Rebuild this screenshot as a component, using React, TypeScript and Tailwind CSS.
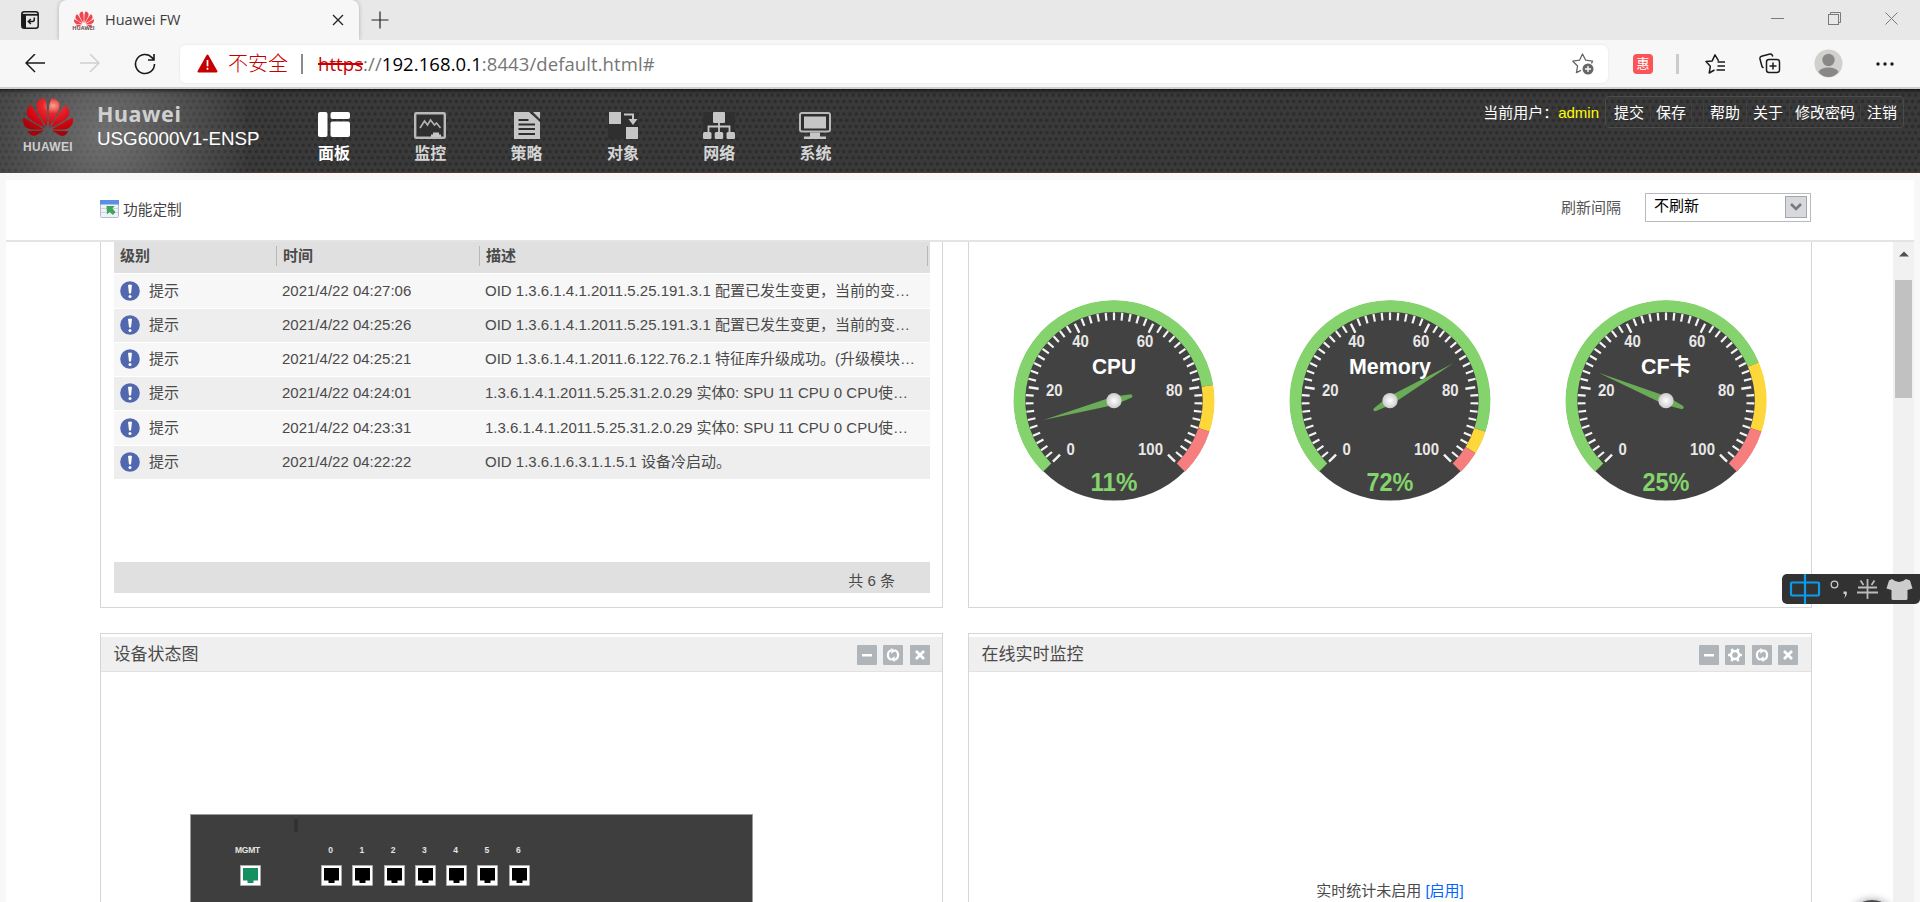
import type { ReactNode } from "react";
import { SiHuawei } from "react-icons/si";

const logs = [
  { time: "2021/4/22 04:27:06", text: "OID 1.3.6.1.4.1.2011.5.25.191.3.1 配置已发生变更，当前的变…", row: "h-[34px] pt-[7px] bg-[#f7f7f7]" },
  { time: "2021/4/22 04:25:26", text: "OID 1.3.6.1.4.1.2011.5.25.191.3.1 配置已发生变更，当前的变…", row: "h-[33px] pt-[6px] bg-[#eeeeee]" },
  { time: "2021/4/22 04:25:21", text: "OID 1.3.6.1.4.1.2011.6.122.76.2.1 特征库升级成功。(升级模块…", row: "h-[33px] pt-[6px] bg-[#f7f7f7]" },
  { time: "2021/4/22 04:24:01", text: "1.3.6.1.4.1.2011.5.25.31.2.0.29 实体0: SPU 11 CPU 0 CPU使…", row: "h-[33px] pt-[6px] bg-[#eeeeee]" },
  { time: "2021/4/22 04:23:31", text: "1.3.6.1.4.1.2011.5.25.31.2.0.29 实体0: SPU 11 CPU 0 CPU使…", row: "h-[34px] pt-[7px] bg-[#f7f7f7]" },
  { time: "2021/4/22 04:22:22", text: "OID 1.3.6.1.6.3.1.1.5.1 设备冷启动。", row: "h-[33px] pt-[6px] bg-[#eeeeee]" },
];

const START = 225;
const SWEEP = 2.7;

function point(value: number, r: number) {
  const a = ((START - SWEEP * value) * Math.PI) / 180;
  return [r * Math.cos(a), -r * Math.sin(a)];
}

function ringPath(from: number, to: number) {
  const [x1, y1] = point(from, 100.4);
  const [x2, y2] = point(to, 100.4);
  const [x3, y3] = point(to, 88.7);
  const [x4, y4] = point(from, 88.7);
  const large = (to - from) * SWEEP > 180 ? 1 : 0;
  return `M${x1} ${y1}A100.4 100.4 0 ${large} 1 ${x2} ${y2}L${x3} ${y3}A88.7 88.7 0 ${large} 0 ${x4} ${y4}Z`;
}

const gaugeLabels = [
  { v: "0", x: -43.3, y: 54.2 },
  { v: "20", x: -59.7, y: -5 },
  { v: "40", x: -33.5, y: -54 },
  { v: "60", x: 31, y: -54 },
  { v: "80", x: 60.3, y: -5 },
  { v: "100", x: 36.5, y: 54.2 },
];

function Gauge({ name, width, value, warn, danger }: { name: string; width: number; value: number; warn: number; danger: number }) {
  const ticks = Array.from({ length: 51 }, (_, i) => i * 2);
  return (
    <svg width="202" height="202" viewBox="-101 -100.7 202 202" fontFamily="'Liberation Sans','Noto Sans CJK SC',sans-serif" fontWeight="bold" textAnchor="middle">
      <defs>
        <radialGradient id="knob">
          <stop offset="0" stopColor="#ffffff" />
          <stop offset="1" stopColor="#cccccc" />
        </radialGradient>
      </defs>
      <circle r="99.9" fill="#424242" />
      <path d={ringPath(0, warn)} fill="#84d36c" />
      <path d={ringPath(warn, danger)} fill="#fed83a" />
      <path d={ringPath(danger, 100)} fill="#f67e7e" />
      {ticks.map((t) => {
        const major = t % 20 === 0;
        const [x1, y1] = point(t, major ? 86.3 : 88.3);
        const [x2, y2] = point(t, major ? 76.3 : 80.5);
        return <line key={t} x1={x1} y1={y1} x2={x2} y2={y2} stroke="#f4f4f4" strokeWidth={major ? 2.4 : 2.2} />;
      })}
      {gaugeLabels.map((l) => (
        <text key={l.v} x={l.x} y={l.y} fontSize="16" fill="#e8e8e8" textLength={l.v.length * 8.3} lengthAdjust="spacingAndGlyphs">
          {l.v}
        </text>
      ))}
      <text y="-26.3" fontSize="21.5" fill="#ffffff" textLength={width} lengthAdjust="spacingAndGlyphs">
        {name}
      </text>
      <path
        d="M-73 0L0 -4.2L18 -1.7Q20 0 18 1.7L0 4.2Z"
        fill="#6aab57"
        transform={`rotate(${SWEEP * value - 45})`}
      />
      <circle r="7.6" fill="url(#knob)" />
      <text y="90.8" fontSize="26" fill="#84d36c" textLength="47" lengthAdjust="spacingAndGlyphs">
        {value}%
      </text>
    </svg>
  );
}

function PetalLogo({ size }: { size: number }) {
  return (
    <>
      <svg width="0" height="0" className="absolute">
        <defs>
          <radialGradient id="petal" cx="0.6" cy="0.2" r="0.75">
            <stop offset="0" stopColor="#f7a58c" />
            <stop offset="0.28" stopColor="#e8252c" />
            <stop offset="0.7" stopColor="#d0050f" />
            <stop offset="1" stopColor="#a5030a" />
          </radialGradient>
        </defs>
      </svg>
      <SiHuawei size={size} fill="url(#petal)" />
    </>
  );
}

function BrowserTabs() {
  return (
    <div className="flex h-10 items-stretch bg-[#e8e8e8] font-['Open_Sans','Noto_Sans_CJK_SC',sans-serif]">
      <div className="flex w-[59px] items-center pl-[21px]">
        <svg width="18" height="18" viewBox="0 0 18 18" fill="none" stroke="#1b1b1b" strokeWidth="1.5">
          <rect x="0.8" y="0.8" width="16.4" height="16.4" rx="2.5" />
          <path d="M1 3.8h16" strokeWidth="1.8" />
          <path d="M1 3h4v14H3q-2 0-2-2z" fill="#1b1b1b" stroke="none" />
          <path d="M13.3 6.5v2q0 2-2 2H7.5M9.8 8L7.3 10.5L9.8 13" />
        </svg>
      </div>
      <div className="flex w-[300px] items-center rounded-t-lg bg-[#f7f7f7] shadow-[0_0_4px_rgba(0,0,0,0.25)]">
        <div className="ml-[14px] flex w-[21px] flex-col items-center">
          <SiHuawei size={20} className="-mb-[3px] text-[#f0454c]" />
          <span className="text-[5.5px] leading-[5px] font-bold text-[#6b4a4a]">HUAWEI</span>
        </div>
        <span className="ml-[11px] -mt-px text-[14.5px] text-[#3c3c3c]">Huawei FW</span>
        <svg className="mr-[15px] ml-auto" width="12" height="12" viewBox="0 0 12 12" stroke="#222" strokeWidth="1.3">
          <path d="M1 1l10 10M11 1L1 11" />
        </svg>
      </div>
      <svg className="ml-[12px] self-center" width="18" height="18" viewBox="0 0 18 18" stroke="#222" strokeWidth="1.2">
        <path d="M9 0.5v17M0.5 9h17" />
      </svg>
      <div className="mr-[22px] -mt-[3px] ml-auto flex items-center gap-[44px]">
        <svg width="13" height="14" viewBox="0 0 13 14" stroke="#7a7a7a">
          <path d="M0 6.5h13" />
        </svg>
        <svg width="13" height="13" viewBox="0 0 13 13" fill="none" stroke="#7a7a7a">
          <rect x="0.5" y="2.5" width="10" height="10" />
          <path d="M2.5 2.5v-2h10v10h-2" />
        </svg>
        <svg width="13" height="13" viewBox="0 0 13 13" stroke="#7a7a7a">
          <path d="M0.5 0.5l12 12M12.5 0.5l-12 12" />
        </svg>
      </div>
    </div>
  );
}

function AddressBar() {
  return (
    <div className="z-10 flex h-[49px] items-center border-b-2 border-[#cecece] bg-[#f7f7f7] font-['Open_Sans','Noto_Sans_CJK_SC',sans-serif]">
      <svg className="ml-[25px]" width="20" height="20" viewBox="0 0 20 20" fill="none" stroke="#1b1b1b" strokeWidth="1.5">
        <path d="M20 9H1M10 0L1 9l9 9" />
      </svg>
      <svg className="ml-[35px]" width="20" height="20" viewBox="0 0 20 20" fill="none" stroke="#cfcfcf" strokeWidth="1.5">
        <path d="M0 9h19M10 0l9 9l-9 9" />
      </svg>
      <svg className="ml-[34px]" width="22" height="22" viewBox="0 0 22 22" fill="none" stroke="#1b1b1b" strokeWidth="1.6">
        <path d="M20.5 11A9.5 9.5 0 1 1 18 4.6l1.6 2M20 1v6h-6" />
      </svg>
      <div className="ml-[24px] flex h-[38px] w-[1428px] items-center rounded-md bg-white shadow-[0_0_3px_rgba(0,0,0,0.08)]">
        <svg className="ml-[17px]" width="21" height="19" viewBox="0 0 21 19">
          <path d="M10.5 1.5L19.5 17.5h-18z" fill="#c50000" stroke="#c50000" strokeWidth="2" strokeLinejoin="round" />
          <path d="M10.5 6v6.2M10.5 13.8v2" stroke="#fff" strokeWidth="1.7" />
        </svg>
        <span className="ml-[10px] text-[20px] leading-[26px] font-light text-[#c50000]">不安全</span>
        <span className="ml-[13px] h-5 w-[2px] bg-[#8a8a8a]" />
        <span className="ml-[15px] text-[18.5px] leading-[26px] tracking-[0.08px] whitespace-nowrap text-[#767676]">
          <span className="text-[#c50000] line-through decoration-2">https</span>://<span className="text-black">192.168.0.1</span>
          :8443/default.html#
        </span>
        <svg className="mr-[14px] ml-auto" width="22" height="22" viewBox="0 0 22 22" fill="none" stroke="#666" strokeWidth="1.3">
          <path d="M19.5 10.5l1-2.3l-6.8-1L10.5 1L7.5 7.2l-6.7 1l4.8 4.8l-1.2 6.7l4.5-2.3" strokeLinejoin="round" />
          <circle cx="16" cy="16" r="5.5" fill="#666" stroke="none" />
          <path d="M16 13v6M13 16h6" stroke="#fff" />
        </svg>
      </div>
      <span className="ml-[25px] flex size-5 items-center justify-center rounded bg-[#fa5358] text-[13px] leading-none text-white">惠</span>
      <span className="ml-[23px] h-5 w-[3px] bg-[#cbcbcb]" />
      <svg className="ml-[26px]" width="21" height="20" viewBox="0 0 21 20" fill="none" stroke="#1b1b1b" strokeWidth="1.5">
        <path d="M13.6 6.8L10 0.9L7.2 6.9L1 7.6l4.3 4.7L4.2 19l5.3-3" strokeLinejoin="round" />
        <path d="M12.5 8H20M12.5 12H20M11.5 16H20" />
      </svg>
      <svg className="ml-[33px]" width="22" height="21" viewBox="0 0 22 21" fill="none" stroke="#1b1b1b" strokeWidth="1.5">
        <rect x="7.5" y="6.5" width="13" height="13" rx="2.5" />
        <path d="M14 9.5v7M10.5 13h7M4.5 15L3 13.5L1 6q-.4-2.2 1.5-2.8L11 1q2-.4 2.8 2.5" />
      </svg>
      <svg className="ml-[33px]" width="29" height="29" viewBox="0 0 29 29">
        <circle cx="14.5" cy="14.5" r="14" fill="#d2d0cd" />
        <circle cx="14.5" cy="11" r="6.2" fill="#8a8886" />
        <path d="M4.5 23q2-4.500 10-4.500t10 4.500q-4 5-10 5t-10-5z" fill="#8a8886" />
      </svg>
      <svg className="ml-[33px]" width="18" height="4" viewBox="0 0 18 4" fill="#1b1b1b">
        <circle cx="2" cy="2" r="1.7" />
        <circle cx="9" cy="2" r="1.7" />
        <circle cx="16" cy="2" r="1.7" />
      </svg>
    </div>
  );
}

function NavIcon({ children }: { children: ReactNode }) {
  return (
    <svg width="32" height="27" viewBox="0 0 32 27" fill="#c6c6c6">
      {children}
    </svg>
  );
}

const navItems = [
  {
    label: "面板",
    icon: (
      <g fill="#fff">
        <rect width="9.5" height="25" rx="2" />
        <rect x="12.5" width="19.5" height="7" rx="2" />
        <rect x="12.5" y="9.5" width="19.5" height="15.5" rx="2" />
      </g>
    ),
  },
  {
    label: "监控",
    icon: (
      <g>
        <rect x="1.2" y="1.2" width="29.6" height="24.6" rx="1" fill="#2f2f2f" stroke="#b9b9b9" strokeWidth="2.4" />
        <path d="M17 25v-2.500h2v-2h6v2h2V25z" />
        <path d="M6 16l4.5-7l3 4l3-5l4 5l2-2l4 5" fill="none" stroke="#b0b0b0" strokeWidth="1.7" />
      </g>
    ),
  },
  {
    label: "策略",
    icon: (
      <g>
        <path d="M3 0h15l11 10v17H3zM22 0h7v7z" />
        <path d="M7.5 8h10M7.5 12.5H24M7.5 17H24M7.5 22H24" stroke="#2f2f2f" strokeWidth="2" />
      </g>
    ),
  },
  {
    label: "对象",
    icon: (
      <g>
        <path d="M1 0h30v27H1z" fill="#2f2f2f" />
        <path d="M2 0h12v12H2zM19 15h12v12H19z" />
        <path d="M17 2.500h9v6" fill="none" stroke="#c6c6c6" strokeWidth="2" />
        <path d="M21.500 7h9L26 13z" />
      </g>
    ),
  },
  {
    label: "网络",
    icon: (
      <g>
        <path d="M0 0h32v27H0z" fill="#2f2f2f" />
        <rect x="10" width="12" height="11" rx="1" />
        <rect y="20" width="8.5" height="7" rx="1.5" />
        <rect x="11.7" y="20" width="8.5" height="7" rx="1.5" />
        <rect x="23.5" y="20" width="8.5" height="7" rx="1.5" />
        <path d="M16 10v10M5.500 20v-5.500h21V20" fill="none" stroke="#c6c6c6" strokeWidth="1.8" />
      </g>
    ),
  },
  {
    label: "系统",
    icon: (
      <g>
        <rect x="1" y="1" width="30" height="18.5" rx="2" fill="#2f2f2f" stroke="#b9b9b9" strokeWidth="2" />
        <path d="M5 4.500h22v12H5zM11 20.500h10v4h6V27H5v-2.500h6z" />
      </g>
    ),
  },
];

function Sep() {
  return <span className="h-5 w-px bg-[#414141]" />;
}

function AppHeader() {
  return (
    <header className="relative flex h-[84px] bg-[#3a3a3b]">
      {/* perforated metal texture */}
      <div className="absolute inset-0 bg-[radial-gradient(circle_at_center,#2b2b2b_1.2px,transparent_2.2px),radial-gradient(circle_at_center,#2b2b2b_1.2px,transparent_2.2px)] bg-[length:6.25px_12.5px] bg-[position:0_0,3.125px_6.25px]" />
      <div className="absolute inset-y-0 left-0 w-[245px] bg-[radial-gradient(ellipse_150px_150px_at_105px_45px,rgba(150,150,150,0.6)_0%,rgba(130,130,130,0.4)_45%,transparent_100%)]" />
      <div className="absolute inset-x-0 top-0 h-[5px] bg-gradient-to-b from-black/50 to-transparent" />
      <div className="absolute right-0 bottom-0 left-[245px] h-px bg-[#5b3232]" />
      <div className="relative mt-[3px] ml-[23px] flex w-[50px] flex-col items-center">
        <PetalLogo size={50} />
        <span className="-mt-px text-[12px] leading-[12px] font-bold tracking-[0.3px] text-[#cfcfcf]">HUAWEI</span>
      </div>
      <div className="relative ml-[24px] flex w-[180px] flex-col pt-[13px] whitespace-nowrap">
        <span className="font-['Noto_Sans',sans-serif] text-[21.5px] leading-[24px] font-bold tracking-[0.6px] text-[#d0d0d0]">Huawei</span>
        <span className="mt-px text-[18.75px] leading-[23px] text-white">USG6000V1-ENSP</span>
      </div>
      <nav className="relative ml-[41px] flex gap-[64.3px] pt-[23px]">
        {navItems.map((item, i) => (
          <div key={item.label} className="flex w-8 flex-col">
            <NavIcon>{item.icon}</NavIcon>
            <span className={`mt-[3px] text-[16px] leading-[24px] font-bold ${i === 0 ? "text-white" : "text-[#d5d5d5]"}`}>{item.label}</span>
          </div>
        ))}
      </nav>
      <div className="relative mt-[7px] mr-[16px] ml-auto flex h-8 items-center text-[15px] leading-[20px] whitespace-nowrap text-white">
        <span className="mt-[2px]">当前用户：</span>
        <span className="mt-[2px] text-[#ffff00]">admin</span>
        <div className="ml-[6px] flex h-8 w-[299px] items-center rounded border border-[#4b4b4b] pt-[2px] pl-[8px]">
          <span className="mr-[6px]">提交</span>
          <Sep />
          <span className="mx-[5px]">保存</span>
          <Sep />
          <span className="w-[11px]" />
          <Sep />
          <span className="mx-[6px]">帮助</span>
          <Sep />
          <span className="mx-[6px]">关于</span>
          <Sep />
          <span className="mx-[5px]">修改密码</span>
          <Sep />
          <span className="ml-[6px]">注销</span>
        </div>
      </div>
    </header>
  );
}

function ActionBar() {
  return (
    <div className="flex h-[62px] items-start border-b-2 border-[#e4e4e4] text-[15px] leading-[20px]">
      <svg className="mt-[20px] ml-[94px]" width="19" height="18" viewBox="0 0 19 18">
        <rect x="0.5" y="0.5" width="18" height="17" rx="1" fill="#eef1f6" stroke="#b3bccb" />
        <rect width="19" height="4.5" fill="#5b8fe6" />
        <path d="M1 8.500h17M1 12.500h17" stroke="#cbd3e0" />
        <path d="M6.500 6h8l-2 2.500l3 3.500l-2.500 3l-3.500-3l-2.500 2.500z" fill="#3da65a" />
      </svg>
      <span className="mt-[20px] ml-[4px] text-[14.7px] text-[#444]">功能定制</span>
      <span className="mt-[18px] ml-auto text-[#555]">刷新间隔</span>
      <div className="mt-[13px] mr-[103px] ml-[24px] flex h-[29px] w-[166px] border border-[#b8bac0] pl-[8px]">
        <span className="mt-[2px] text-black">不刷新</span>
        <span className="mt-[2px] mr-[3px] ml-auto flex h-[22px] w-[22px] items-center justify-center border border-[#a3a6ac] bg-[#d7d9dc]">
          <svg width="12" height="8" viewBox="0 0 12 8" fill="none" stroke="#757a80" strokeWidth="2.6">
            <path d="M1 1l5 5l5-5" />
          </svg>
        </span>
      </div>
    </div>
  );
}

function AlarmLog() {
  return (
    <section className="flex h-[366px] shrink-0 flex-col border border-t-0 border-[#d6d6d6] pr-[12px] pl-[13px] text-[15px] leading-[20px] text-[#4a4a4a]">
      <div className="mb-px flex h-[31px] bg-[#e0e0e0] pt-1 font-bold">
        <span className="h-5 w-[163px] border-r border-[#b9b9b9] pl-[6px]">级别</span>
        <span className="h-5 w-[203px] border-r border-[#b9b9b9] pl-[6px]">时间</span>
        <span className="h-5 w-[448px] border-r border-[#b9b9b9] pl-[6px]">描述</span>
      </div>
      <div className="flex flex-col gap-px">
        {logs.map((log) => (
          <div key={log.time} className={`flex items-start whitespace-nowrap ${log.row}`}>
            <svg className="ml-[6px]" width="20" height="20" viewBox="0 0 20 20">
              <circle cx="10" cy="10" r="9.8" fill="#5168ae" />
              <path d="M8 4q2-1.200 4 0l-1 8.500H9z" fill="#fff" />
              <circle cx="10" cy="15.5" r="1.5" fill="#fff" />
            </svg>
            <span className="ml-[9px] w-[133px]">提示</span>
            <span className="w-[203px]">{log.time}</span>
            <span>{log.text}</span>
          </div>
        ))}
      </div>
      <div className="mt-[83px] flex h-[31px] shrink-0 justify-end bg-[#e0e0e0] pt-[9px] pr-[35px]">共 6 条</div>
    </section>
  );
}

const toolIcons = {
  minus: <path d="M5 9h10v2.500H5z" fill="#fff" />,
  gear: (
    <g fill="none" stroke="#fff">
      <circle cx="10" cy="10" r="4" strokeWidth="2.4" />
      <path d="M3 10h3M14 10h3M6.500 3.900l1.500 2.600M12 13.500l1.500 2.600M13.500 3.900L12 6.500M8 13.500l-1.500 2.600" strokeWidth="2.6" />
    </g>
  ),
  // two half arcs around a slash-shaped gap
  refresh: (
    <g>
      <path d="M8.500 14.800A5 5 0 0 1 8.500 5.200M11.500 5.200A5 5 0 0 1 11.500 14.800" fill="none" stroke="#fff" strokeWidth="2.2" />
      <path d="M8.300 3l4.200 2.800L8.300 8.800zM11.700 17l-4.200-2.800l4.200-3z" fill="#fff" />
    </g>
  ),
  close: <path d="M6 6l8 8M14 6l-8 8" stroke="#fff" strokeWidth="2.8" />,
};

function Panel({ title, tools, children }: { title: string; tools: (keyof typeof toolIcons)[]; children: ReactNode }) {
  return (
    <section className="flex h-[400px] shrink-0 flex-col border border-[#d6d6d6] pt-[3px] text-[#4a4a4a]">
      <div className="flex h-[35px] shrink-0 items-center border-b border-[#e2e2e2] bg-[#efefef] pr-[12px] pl-[12.5px]">
        <span className="mt-px text-[17px] leading-[24px]">{title}</span>
        <div className="mt-px ml-auto flex gap-[6px]">
          {tools.map((tool) => (
            <svg key={tool} className="even:mr-px" width="20" height="20" viewBox="0 0 20 20">
              <rect width="20" height="20" rx="1" fill="#b0b5b9" />
              {toolIcons[tool]}
            </svg>
          ))}
        </div>
      </div>
      {children}
    </section>
  );
}

function Port({ label, active }: { label: string; active?: boolean }) {
  return (
    <div className="flex w-[21px] flex-col items-center">
      <span className={`text-[8.5px] leading-[8px] font-bold text-[#e4e4e4] ${active ? "mr-[6px] tracking-[-0.2px]" : "mr-[2px]"}`}>{label}</span>
      <svg className="mt-[11px]" width="21" height="21" viewBox="0 0 21 21">
        <rect x="0.5" y="0.5" width="20" height="20" fill="#fff" stroke="#b5b5b5" strokeWidth="0.6" />
        <path d="M3 3h15v12.500h-4.500v2.500h-6v-2.500H3z" fill={active ? "#148f60" : "#000"} />
      </svg>
    </div>
  );
}

function Device() {
  return (
    <div className="mt-[142px] ml-[89px] h-[200px] w-[563px] border border-[#9a9a9a] bg-[#3e3e3e]">
      <div className="mt-[4px] ml-[103px] h-[13px] w-[4px] bg-[#323232]" />
      <div className="mt-[14px] flex pl-[49px]">
        <Port label="MGMT" active />
        <div className="ml-[60px] flex gap-[10.3px]">
          {["0", "1", "2", "3", "4", "5", "6"].map((n) => (
            <Port key={n} label={n} />
          ))}
        </div>
      </div>
    </div>
  );
}

function ImeBar() {
  return (
    <div className="absolute top-[574px] right-0 z-20 flex h-[30px] w-[138px] items-center rounded-l-[5px] rounded-br-[5px] bg-[#323232]">
      <svg width="138" height="30" viewBox="0 0 138 30" fill="none">
        <rect x="9" y="8.5" width="28" height="13" rx="1" stroke="#0a9ced" strokeWidth="2.2" />
        <path d="M23 0v30" stroke="#0a9ced" strokeWidth="2.2" />
        <circle cx="52.5" cy="10.5" r="3.3" stroke="#ccc" strokeWidth="1.3" />
        <path d="M61.500 17.500h3q1.500 3-2.500 7q1.500-3 1-4.500h-1.500z" fill="#ccc" />
        <path d="M85.500 5v20M76 13.500h19M75 18.500h21M78.500 6.500l3 4.500M92.500 6.500l-3 4.500" stroke="#bbb" strokeWidth="1.8" />
        <path d="M110 5q7 6 14 0l4 1.500l2.500 8l-5 1.500v8.500q0 1.500-1.500 1.500h-13q-1.500 0-1.500-1.500V16l-5-1.500l2.500-8z" fill="#ccc" />
      </svg>
    </div>
  );
}

export default function App() {
  return (
    <div className="relative flex h-[902px] w-[1920px] flex-col overflow-hidden bg-[#f8f8f8] font-['Liberation_Sans','Noto_Sans_CJK_SC',sans-serif]">
      <BrowserTabs />
      <AddressBar />
      <AppHeader />
      <div className="mx-[6px] mt-[7px] flex min-h-0 flex-1 flex-col bg-white">
        <ActionBar />
        <div className="flex min-h-0 flex-1">
          <main className="flex flex-1 gap-[25px] overflow-hidden pl-[94px]">
            <div className="flex w-[843px] flex-col gap-[25px]">
              <AlarmLog />
              <Panel title="设备状态图" tools={["minus", "refresh", "close"]}>
                <Device />
              </Panel>
            </div>
            <div className="flex w-[844px] flex-col gap-[25px]">
              <section className="flex h-[366px] shrink-0 gap-[74px] border border-t-0 border-[#d6d6d6] pt-[58px] pl-[44px]">
                <Gauge name="CPU" width={44} value={11} warn={80} danger={90} />
                <Gauge name="Memory" width={82} value={72} warn={90} danger={95} />
                <Gauge name="CF卡" width={50} value={25} warn={75} danger={90} />
              </section>
              <Panel title="在线实时监控" tools={["minus", "gear", "refresh", "close"]}>
                <div className="mt-[209px] text-center text-[15px] leading-[20px]">
                  实时统计未启用 <a className="text-[#0066ff]">[启用]</a>
                </div>
              </Panel>
            </div>
          </main>
          <div className="flex w-[21px] flex-col items-center bg-[#f1f1f1]">
            <svg className="mt-[9px]" width="10" height="6" viewBox="0 0 10 6">
              <path d="M5 0.500L10 5.500H0z" fill="#505050" />
            </svg>
            <div className="mt-[23px] h-[118px] w-[17px] bg-[#c1c1c1]" />
          </div>
        </div>
      </div>
      <ImeBar />
      <div className="absolute top-[900px] left-[1848px] size-12 rounded-full bg-[#4a4a55] shadow-[0_0_8px_rgba(0,0,0,0.4)]" />
    </div>
  );
}
